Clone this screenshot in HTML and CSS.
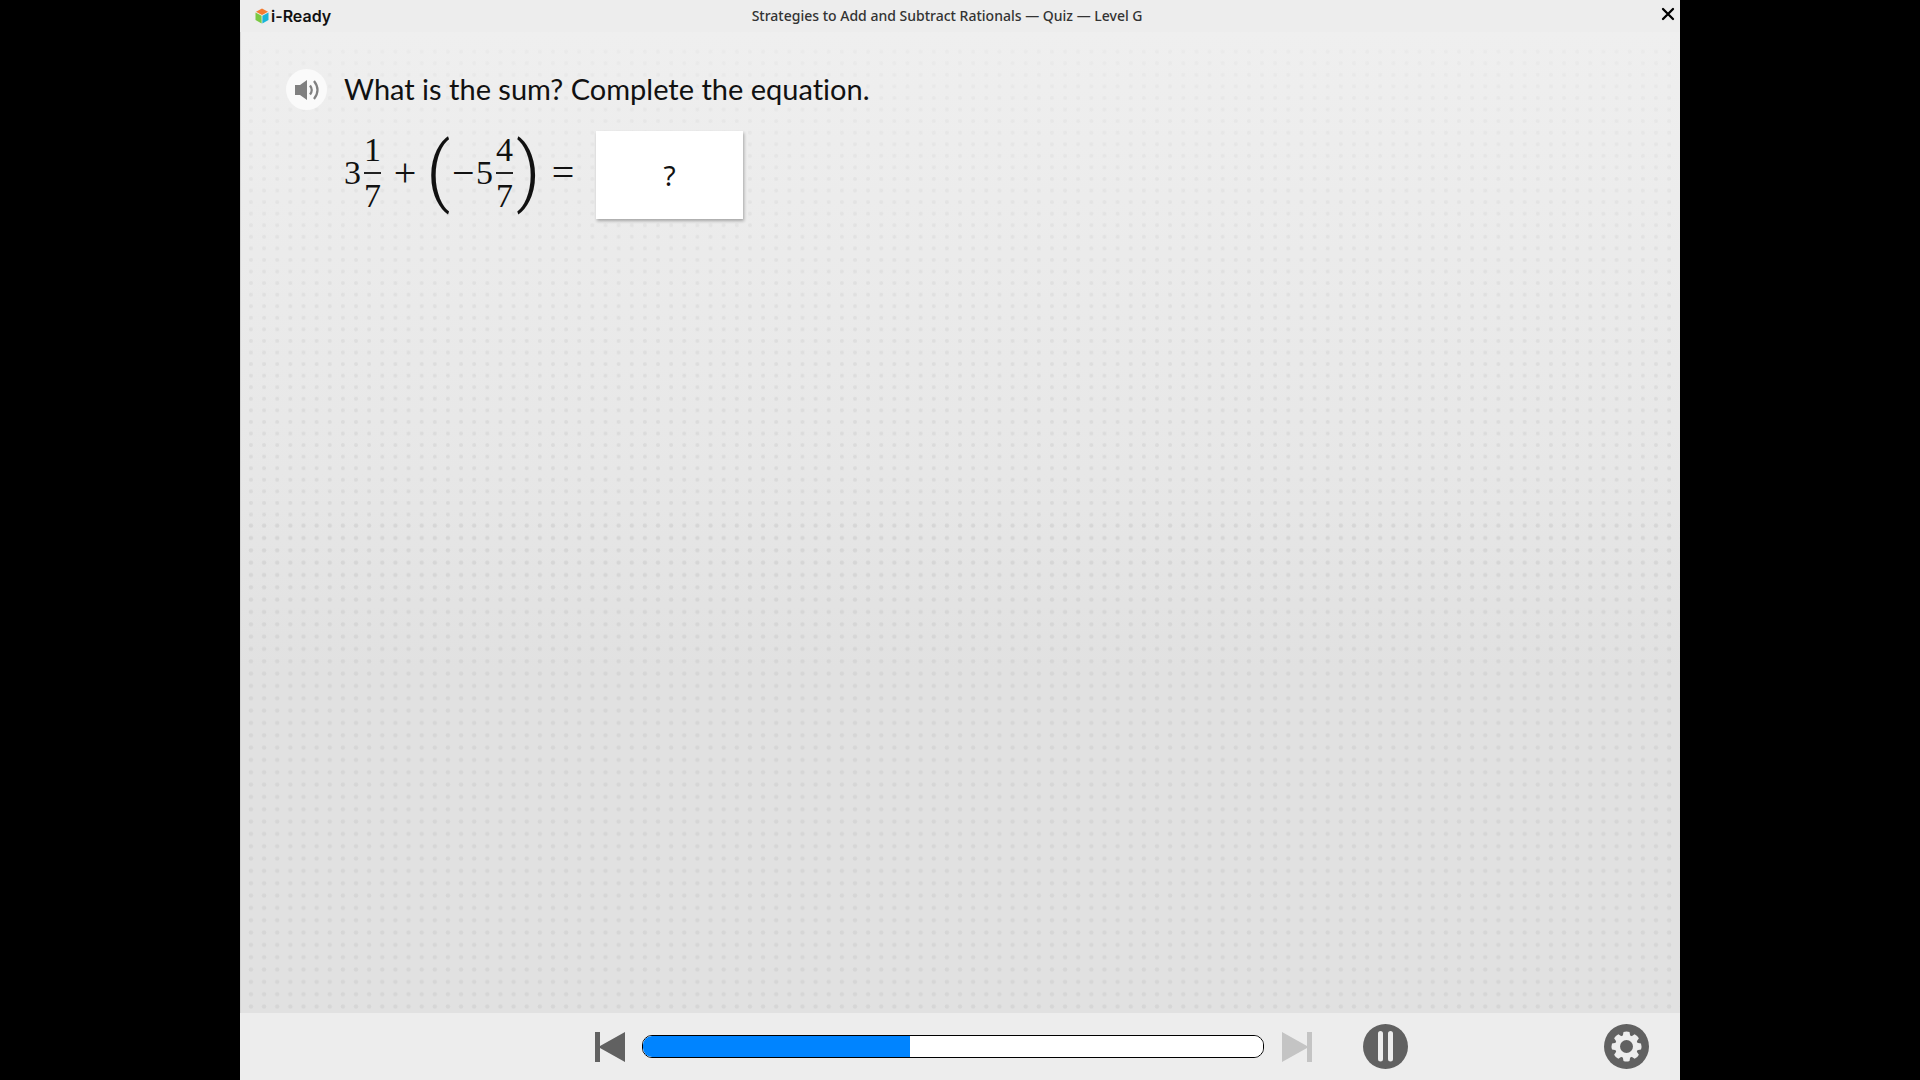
FILE: index.html
```
<!DOCTYPE html>
<html lang="en">
<head>
  <meta charset="UTF-8">
  <title>i-Ready</title>
  <link rel="stylesheet" href="styles.css">
</head>
<body>
  <div class="lesson">
    <header class="topbar">
      <div class="logo">
        <svg class="logo-cube" viewBox="0 0 14 16" aria-hidden="true">
          <path d="M7 0.5 L13 3.8 L7 7 L1 3.8 Z" fill="#f47b30"/>
          <path d="M0.5 4.6 L6.6 7.8 V15.5 L0.5 12 Z" fill="#7ac943"/>
          <path d="M13.5 4.6 L7.4 7.8 V15.5 L13.5 12 Z" fill="#18b5d8"/>
        </svg>
        <span>i-Ready</span>
      </div>
      <h1 class="title">Strategies to Add and Subtract Rationals — Quiz — Level G</h1>
      <button class="close" aria-label="Close">
        <svg viewBox="0 0 14 14" aria-hidden="true">
          <path d="M2 2 L12 12 M12 2 L2 12" stroke="#000" stroke-width="2.3" stroke-linecap="round"/>
        </svg>
      </button>
    </header>

    <main class="stage">
      <svg class="dots" viewBox="0 0 1440 981" preserveAspectRatio="none" aria-hidden="true">
        <defs>
          <pattern id="dotsTop" x="3.4" y="13.9" width="13.14" height="11.57" patternUnits="userSpaceOnUse">
            <circle cx="6.57" cy="5.78" r="2" fill="#d5d5d5"/>
          </pattern>
          <pattern id="dotsBottom" x="3.4" y="487.5" width="13.14" height="12.33" patternUnits="userSpaceOnUse">
            <circle cx="6.57" cy="6.16" r="2.2" fill="#d6d6d6"/>
          </pattern>
          <linearGradient id="fade" x1="0" y1="0" x2="0" y2="1">
            <stop offset="0" stop-color="#fff" stop-opacity="0.15"/>
            <stop offset="1" stop-color="#fff" stop-opacity="0.8"/>
          </linearGradient>
          <mask id="fadeMask"><rect width="1440" height="488" fill="url(#fade)"/></mask>
        </defs>
        <rect y="14" width="1440" height="474" fill="url(#dotsTop)" mask="url(#fadeMask)"/>
        <rect y="488" width="1440" height="493" fill="url(#dotsBottom)"/>
      </svg>

      <div class="question">
        <button class="speaker" aria-label="Read aloud">
          <svg viewBox="0 0 26 24" aria-hidden="true">
            <path d="M1 7 H6 L13 2 V22 L6 17 H1 Z" fill="#808080"/>
            <path d="M16 7.500 Q19.500 12 16 16.500 M20 3 Q27 12 20 21" fill="none" stroke="#808080" stroke-width="2.200"/>
          </svg>
        </button>
        <div class="problem">
          <p class="prompt">What is the sum? Complete the equation.</p>
          <div class="equation">
            <span>3</span>
            <span class="fraction"><span>1</span><span class="under">7</span></span>
            <span class="operator">+</span>
            <span class="paren">(</span>
            <span class="minus">−</span>
            <span>5</span>
            <span class="fraction"><span>4</span><span class="under">7</span></span>
            <span class="paren">)</span>
            <span class="operator">=</span>
            <button class="answer">?</button>
          </div>
        </div>
      </div>
    </main>

    <footer class="controls">
      <button class="step" aria-label="Previous">
        <svg viewBox="0 0 30 30" aria-hidden="true">
          <path d="M0 0 H5 V14 L30 0 V30 L5 16 V30 H0 Z" fill="#616161"/>
        </svg>
      </button>
      <progress class="progress" value="43" max="100" aria-label="Lesson progress"></progress>
      <button class="step" aria-label="Next" disabled>
        <svg viewBox="0 0 30 30" aria-hidden="true">
          <path d="M30 0 H25 V14 L0 0 V30 L25 16 V30 H30 Z" fill="#c4c4c4"/>
        </svg>
      </button>
      <button class="round pause" aria-label="Pause">
        <svg viewBox="0 0 45 45" aria-hidden="true">
          <circle cx="22.500" cy="22.500" r="22.500" fill="#616161"/>
          <path d="M17.500 9.500 V35 M27.500 9.500 V35" stroke="#ededed" stroke-width="5" stroke-linecap="round"/>
        </svg>
      </button>
      <button class="round settings" aria-label="Settings">
        <svg viewBox="-22.500 -22.500 45 45" aria-hidden="true">
          <circle r="22.500" fill="#616161"/>
          <g fill="#ededed">
            <circle r="11.500"/>
            <path id="teeth" d="M-3 -14.500 Q0 -15.500 3 -14.500 L4 -9 V9 L3 14.500 Q0 15.500 -3 14.500 L-4 9 V-9 Z"/>
            <use href="#teeth" transform="rotate(45)"/>
            <use href="#teeth" transform="rotate(90)"/>
            <use href="#teeth" transform="rotate(135)"/>
          </g>
          <circle r="6.500" fill="#616161"/>
        </svg>
      </button>
    </footer>
  </div>
</body>
</html>
```
FILE: styles.css
```
* {
  box-sizing: border-box;
}

body {
  margin: 0;
  background-color: #000;
  color: #111;
  font-family: "Noto Sans", sans-serif;
}

button {
  padding: 0;
  border: none;
  background: none;
  color: inherit;
  cursor: pointer;
}

svg {
  display: block;
}

/* the lesson keeps a 4:3 frame in the middle of the window */
.lesson {
  display: flex;
  flex-direction: column;
  width: min(100vw, 100vh * 4 / 3);
  height: 100vh;
  margin: 0 auto;
  background-color: #ededed;
}

.topbar {
  display: flex;
  align-items: center;
  height: 32px;
  padding: 0 5px 0 15px;
}

.logo {
  display: flex;
  align-items: center;
  gap: 2px;
  font-family: Inter, sans-serif;
  font-size: 16px;
  font-weight: 600;
  line-height: 30px;
}

.logo-cube {
  width: 14px;
  height: 16px;
}

.title {
  flex: 1;
  margin: 0;
  padding-right: 98px;
  font-size: 14px;
  font-weight: 500;
  line-height: 32px;
  text-align: center;
  color: #333;
}

.close {
  height: 28px;
  padding-bottom: 4px;
}

.close svg {
  width: 14px;
  height: 14px;
}

.stage {
  position: relative;
  flex: 1;
  padding: 37px 45px;
  border-left: 1px solid #d6d6d6;
  background: linear-gradient(#efefef, #e7e7e7 45%, #e1e1e1 65%);
}

.dots {
  position: absolute;
  inset: 0;
  width: 100%;
  height: 100%;
}

.question {
  position: relative;
  display: flex;
  gap: 17px;
}

.speaker {
  display: flex;
  align-items: center;
  justify-content: center;
  width: 41px;
  height: 41px;
  border-radius: 50%;
  background-color: #fafafa;
}

.speaker svg {
  width: 26px;
  height: 24px;
}

.prompt {
  margin: 0;
  font-family: Lato, sans-serif;
  font-size: 29px;
  font-variant-ligatures: none;
  line-height: 40px;
}

.equation {
  display: flex;
  align-items: center;
  margin-top: 19px;
  font-family: "Liberation Serif", serif;
  font-size: 34px;
  line-height: 44px;
}

.equation > span {
  padding-bottom: 4px;
}

.fraction {
  display: flex;
  flex-direction: column;
  margin: 0 3px;
  text-align: center;
}

.under {
  border-top: 2px solid #222;
}

.operator {
  width: 42px;
  font-size: 40px;
  text-align: center;
}

.equation > .paren {
  width: 26px;
  padding-bottom: 8px;
  font-family: Roboto, sans-serif;
  font-size: 76px;
  font-weight: 300;
  line-height: 80px;
}

.minus {
  width: 24px;
  font-size: 40px;
}

.answer {
  width: 147px;
  height: 88px;
  margin-left: 12px;
  background-color: #fff;
  box-shadow: 1px 2px 3px rgba(0,0,0,0.3);
  font-family: "Noto Sans", sans-serif;
  font-size: 28px;
}

.controls {
  display: flex;
  align-items: center;
  height: 67px;
  padding: 0 31px 0 355px;
}

.step,
.step svg {
  width: 30px;
  height: 30px;
}

.round,
.round svg {
  width: 45px;
  height: 45px;
}

.progress {
  flex: 1;
  height: 23px;
  margin: 0 18px 0 17px;
  border: 1px solid #000;
  border-radius: 10px;
  overflow: hidden;
  appearance: none;
  background-color: #fff;
}

.progress::-webkit-progress-bar {
  background-color: #fff;
}

.progress::-webkit-progress-value {
  background-color: #0084ff;
}

.pause {
  margin-left: 51px;
}

.settings {
  margin-left: 196px;
}
```
